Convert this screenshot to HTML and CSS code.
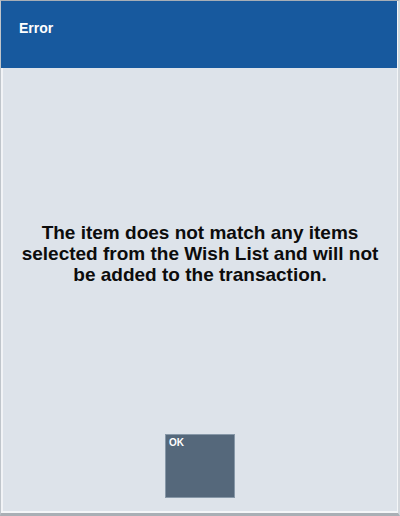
FILE: index.html
```html
<!DOCTYPE html>
<html lang="en">
<head>
<meta charset="utf-8">
<title>Error</title>
<link rel="stylesheet" href="styles.css">
</head>
<body>
<div class="frame">
  <div class="panel">
    <header class="titlebar">Error</header>
    <main class="content">
      <p class="message">The item does not match any items selected from the Wish List and will not be added to the transaction.</p>
      <div class="actions">
        <button class="btn" type="button">OK</button>
      </div>
    </main>
  </div>
</div>
</body>
</html>
```
FILE: styles.css
```css
html, body {
  margin: 0;
  padding: 0;
  background: #c9ced4;
}
.frame {
  width: 400px;
  height: 516px;
  box-sizing: border-box;
  border-top: 1px solid #a7aeb6;
  border-left: 1px solid #bfc5cb;
  border-right: 2px solid #d3d8dd;
  border-bottom: 3px solid #a9afb5;
  background: #f4f6f8;
  font-family: "Liberation Sans", Arial, sans-serif;
}
.panel {
  height: 100%;
  box-sizing: border-box;
  display: flex;
  flex-direction: column;
  border-right: 1px solid #f4f6f8;
  border-bottom: 2px solid #f4f6f8;
}
.titlebar {
  height: 67px;
  box-sizing: border-box;
  background: #17599e;
  color: #ffffff;
  font-weight: bold;
  font-size: 14px;
  line-height: 16px;
  padding: 19px 0 0 18px;
}
.content {
  flex: 1;
  background: #dde3ea;
  border-left: 2px solid #f1f3f6;
  display: flex;
  flex-direction: column;
  align-items: center;
}
.message {
  margin: 154px 0 0;
  text-align: center;
  font-size: 19px;
  line-height: 21px;
  font-weight: bold;
  color: #0c0c0c;
  width: 370px;
}
.actions {
  margin-top: auto;
  margin-bottom: 13px;
  display: flex;
  justify-content: center;
  width: 100%;
}
.btn {
  width: 70px;
  height: 64px;
  box-sizing: border-box;
  margin-left: 0;
  background: #55687b;
  border: 1px solid #8798a8;
  color: #ffffff;
  font-family: "Liberation Sans", Arial, sans-serif;
  font-weight: bold;
  font-size: 10px;
  line-height: 12px;
  text-align: left;
  padding: 2px 3px;
  display: flex;
  align-items: flex-start;
}
```
